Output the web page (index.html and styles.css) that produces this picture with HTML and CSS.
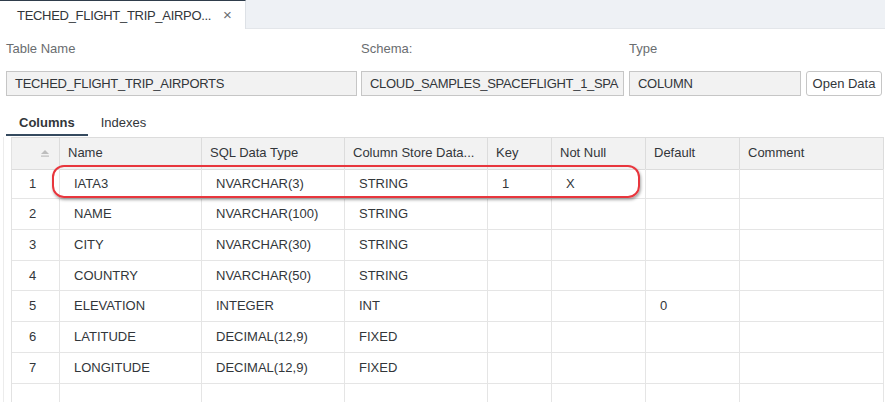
FILE: index.html
```html
<!DOCTYPE html>
<html>
<head>
<meta charset="utf-8">
<link rel="stylesheet" href="styles.css">
</head>
<body>
<div class="tabbar">
  <div class="tab">
    <span class="tab-title">TECHED_FLIGHT_TRIP_AIRPO...</span>
    <span class="tab-close">×</span>
  </div>
</div>

<div class="form">
  <div class="label">Table Name</div>
  <div class="label">Schema:</div>
  <div class="label">Type</div>
  <div></div>
  <div class="field">TECHED_FLIGHT_TRIP_AIRPORTS</div>
  <div class="field">CLOUD_SAMPLES_SPACEFLIGHT_1_SPA</div>
  <div class="field">COLUMN</div>
  <div class="button">Open Data</div>
</div>

<div class="subtabs">
  <div class="subtab active">Columns</div>
  <div class="subtab">Indexes</div>
</div>

<div class="table-area">
  <div class="grid">
    <div class="hcell sort"><svg width="10" height="7" viewBox="0 0 10 7"><path d="M5 0 L9 4 L1 4 Z" fill="#bdbdbd"/><rect x="1" y="5.5" width="8" height="1.2" fill="#bdbdbd"/></svg></div>
    <div class="hcell">Name</div>
    <div class="hcell">SQL Data Type</div>
    <div class="hcell">Column Store Data...</div>
    <div class="hcell">Key</div>
    <div class="hcell">Not Null</div>
    <div class="hcell">Default</div>
    <div class="hcell">Comment</div>

    <div class="cell num">1</div><div class="cell">IATA3</div><div class="cell">NVARCHAR(3)</div><div class="cell">STRING</div><div class="cell">1</div><div class="cell">X</div><div class="cell"></div><div class="cell"></div>
    <div class="cell num">2</div><div class="cell">NAME</div><div class="cell">NVARCHAR(100)</div><div class="cell">STRING</div><div class="cell"></div><div class="cell"></div><div class="cell"></div><div class="cell"></div>
    <div class="cell num">3</div><div class="cell">CITY</div><div class="cell">NVARCHAR(30)</div><div class="cell">STRING</div><div class="cell"></div><div class="cell"></div><div class="cell"></div><div class="cell"></div>
    <div class="cell num">4</div><div class="cell">COUNTRY</div><div class="cell">NVARCHAR(50)</div><div class="cell">STRING</div><div class="cell"></div><div class="cell"></div><div class="cell"></div><div class="cell"></div>
    <div class="cell num">5</div><div class="cell">ELEVATION</div><div class="cell">INTEGER</div><div class="cell">INT</div><div class="cell"></div><div class="cell"></div><div class="cell">0</div><div class="cell"></div>
    <div class="cell num">6</div><div class="cell">LATITUDE</div><div class="cell">DECIMAL(12,9)</div><div class="cell">FIXED</div><div class="cell"></div><div class="cell"></div><div class="cell"></div><div class="cell"></div>
    <div class="cell num">7</div><div class="cell">LONGITUDE</div><div class="cell">DECIMAL(12,9)</div><div class="cell">FIXED</div><div class="cell"></div><div class="cell"></div><div class="cell"></div><div class="cell"></div>
    <div class="cell num"></div><div class="cell"></div><div class="cell"></div><div class="cell"></div><div class="cell"></div><div class="cell"></div><div class="cell"></div><div class="cell"></div>
  </div>
  <div class="highlight"></div>
</div>
</body>
</html>
```

FILE: styles.css
```css
* { box-sizing: border-box; }

html, body {
  margin: 0;
  padding: 0;
  background: #ffffff;
  overflow: hidden;
}

body {
  font-family: "Liberation Sans", Arial, sans-serif;
  font-size: 13px;
  color: #32363a;
  width: 885px;
  height: 402px;
}

.tabbar {
  height: 29px;
  background: #eef1f5;
  border-bottom: 1px solid #e3e6ea;
  display: flex;
}

.tab {
  width: 246px;
  height: 29px;
  background: #ffffff;
  border-top: 1px solid #2f3d4b;
  border-right: 1px solid #dde1e6;
  display: flex;
  align-items: center;
  padding-left: 17px;
}

.tab-title {
  width: 206px;
  letter-spacing: -0.3px;
}

.tab-close {
  color: #6a6d70;
  font-size: 15px;
  line-height: 14px;
}

.form {
  display: grid;
  grid-template-columns: 351px 262px 172px 76px;
  column-gap: 5px;
  padding: 12px 0 0 6px;
}

.form > :nth-child(2), .form > :nth-child(6) {
  margin-left: -1px;
}

.label {
  color: #6a6d70;
  height: 16px;
  line-height: 16px;
  margin-bottom: 14px;
}

.field {
  height: 25px;
  line-height: 23px;
  background: #f2f2f2;
  border: 1px solid #c6c6c6;
  padding-left: 8px;
  white-space: nowrap;
  overflow: hidden;
  letter-spacing: -0.3px;
}

.button {
  height: 25px;
  line-height: 23px;
  background: #ffffff;
  border: 1px solid #c6c6c6;
  border-radius: 3px;
  text-align: center;
}

.subtabs {
  display: flex;
  padding-left: 6px;
  margin-top: 13px;
  height: 27px;
}

.subtab {
  padding: 6px 13px 0 13px;
  line-height: 16px;
  height: 27px;
}

.subtab.active {
  font-weight: bold;
  border-bottom: 2px solid #354a5f;
}

.table-area {
  position: relative;
  margin-top: 1px;
  padding-left: 7px;
  margin-left: 3px;
  border-left: 1px solid #ececec;
}

.grid {
  display: grid;
  grid-template-columns: 48px 142px 143px 143px 64px 94px 94px 144px;
  grid-auto-rows: 30.7px;
  border-left: 1px solid #e2e2e2;
  border-top: 1px solid #dcdcdc;
  width: 873px;
}

.hcell {
  height: 32px;
  background: #f2f2f2;
  border-right: 1px solid #dcdcdc;
  border-bottom: 1px solid #dcdcdc;
  padding-left: 8px;
  line-height: 30px;
  white-space: nowrap;
  overflow: hidden;
}

.hcell.sort {
  display: flex;
  align-items: center;
  justify-content: flex-end;
  padding-right: 9px;
}

.cell {
  border-right: 1px solid #e5e5e5;
  border-bottom: 1px solid #e5e5e5;
  padding-left: 14px;
  line-height: 30px;
  white-space: nowrap;
}

.cell.num {
  padding-left: 0;
  padding-right: 6px;
  text-align: center;
}

.highlight {
  position: absolute;
  left: 48px;
  top: 28px;
  width: 588px;
  height: 33px;
  border: 2.5px solid #e8363d;
  border-radius: 12px;
  box-shadow: 1px 2px 3px rgba(0, 0, 0, 0.35);
}
```
